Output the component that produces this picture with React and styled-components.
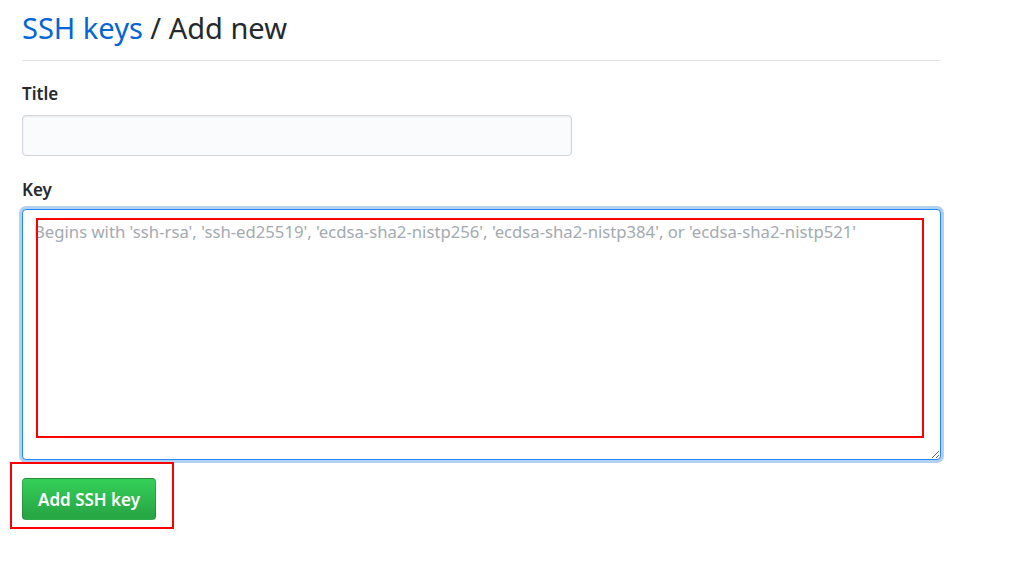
import React from 'react';
import styled, { createGlobalStyle } from 'styled-components';

const GlobalStyle = createGlobalStyle`
  body {
    margin: 0;
    background: #fff;
    color: #24292e;
    font-family: "Noto Sans", "Open Sans", sans-serif;
  }
`;

const Page = styled.div`
  width: 919px;
  padding: 0 22px 40px;
`;

const Subhead = styled.div`
  border-bottom: 1px solid #e1e4e8;
  padding: 9px 0 13px;
  margin-bottom: 20px;
`;

const Heading = styled.h2`
  margin: 0;
  font-size: 29px;
  font-weight: 400;
  line-height: 38px;

  a {
    color: #0366d6;
    text-decoration: none;
  }
`;

const Field = styled.div`
  margin-bottom: ${props => props.last ? '18px' : '21px'};
`;

const Label = styled.label`
  display: block;
  font-size: 17px;
  font-weight: 600;
  line-height: 26px;
  margin-bottom: ${props => props.gap || 6}px;
`;

const Input = styled.input`
  display: block;
  box-sizing: border-box;
  width: 550px;
  height: 41px;
  background: #fafbfc;
  border: 1px solid #d1d5da;
  border-radius: 4px;
  box-shadow: inset 0 1px 2px rgba(27, 31, 35, 0.075);
  outline: none;
`;

const Annotated = styled.div`
  position: relative;
  display: ${props => props.inline ? 'inline-block' : 'block'};
  vertical-align: top;
`;

const Mark = styled.div`
  position: absolute;
  left: ${props => props.left}px;
  top: ${props => props.top}px;
  width: ${props => props.w}px;
  height: ${props => props.h}px;
  box-sizing: border-box;
  border: 2px solid #ff0000;
  pointer-events: none;
`;

const TextArea = styled.textarea`
  display: block;
  box-sizing: border-box;
  width: 919px;
  height: 251px;
  padding: 10px 11px;
  font-family: "Noto Sans", "Open Sans", sans-serif;
  font-size: 16.7px;
  line-height: 23px;
  color: #24292e;
  background: #fff;
  border: 1px solid #2188ff;
  border-radius: 4px;
  box-shadow: 0 0 0 3px rgba(3, 102, 214, 0.3);
  outline: none;
  resize: vertical;

  &::placeholder {
    color: #a3aab1;
  }
`;

const Button = styled.button`
  display: block;
  height: 42px;
  padding: 0 15px;
  font-family: "Noto Sans", "Open Sans", sans-serif;
  font-size: 17px;
  font-weight: 600;
  color: #fff;
  background: linear-gradient(-180deg, #34d058 0%, #28a745 90%);
  border: 1px solid rgba(27, 31, 35, 0.2);
  border-radius: 4px;
  cursor: pointer;
`;

export default function App() {
  return (
    <Page>
      <GlobalStyle />
      <Subhead>
        <Heading>
          <a href="#keys">SSH keys</a> / Add new
        </Heading>
      </Subhead>

      <Field>
        <Label gap={8}>Title</Label>
        <Input type="text" />
      </Field>

      <Field last>
        <Label>Key</Label>
        <Annotated>
          <TextArea placeholder="Begins with 'ssh-rsa', 'ssh-ed25519', 'ecdsa-sha2-nistp256', 'ecdsa-sha2-nistp384', or 'ecdsa-sha2-nistp521'" />
          <Mark left={14} top={9} w={888} h={220} />
        </Annotated>
      </Field>

      <Annotated inline>
        <Button>Add SSH key</Button>
        <Mark left={-12} top={-16} w={164} h={67} />
      </Annotated>
    </Page>
  );
}
